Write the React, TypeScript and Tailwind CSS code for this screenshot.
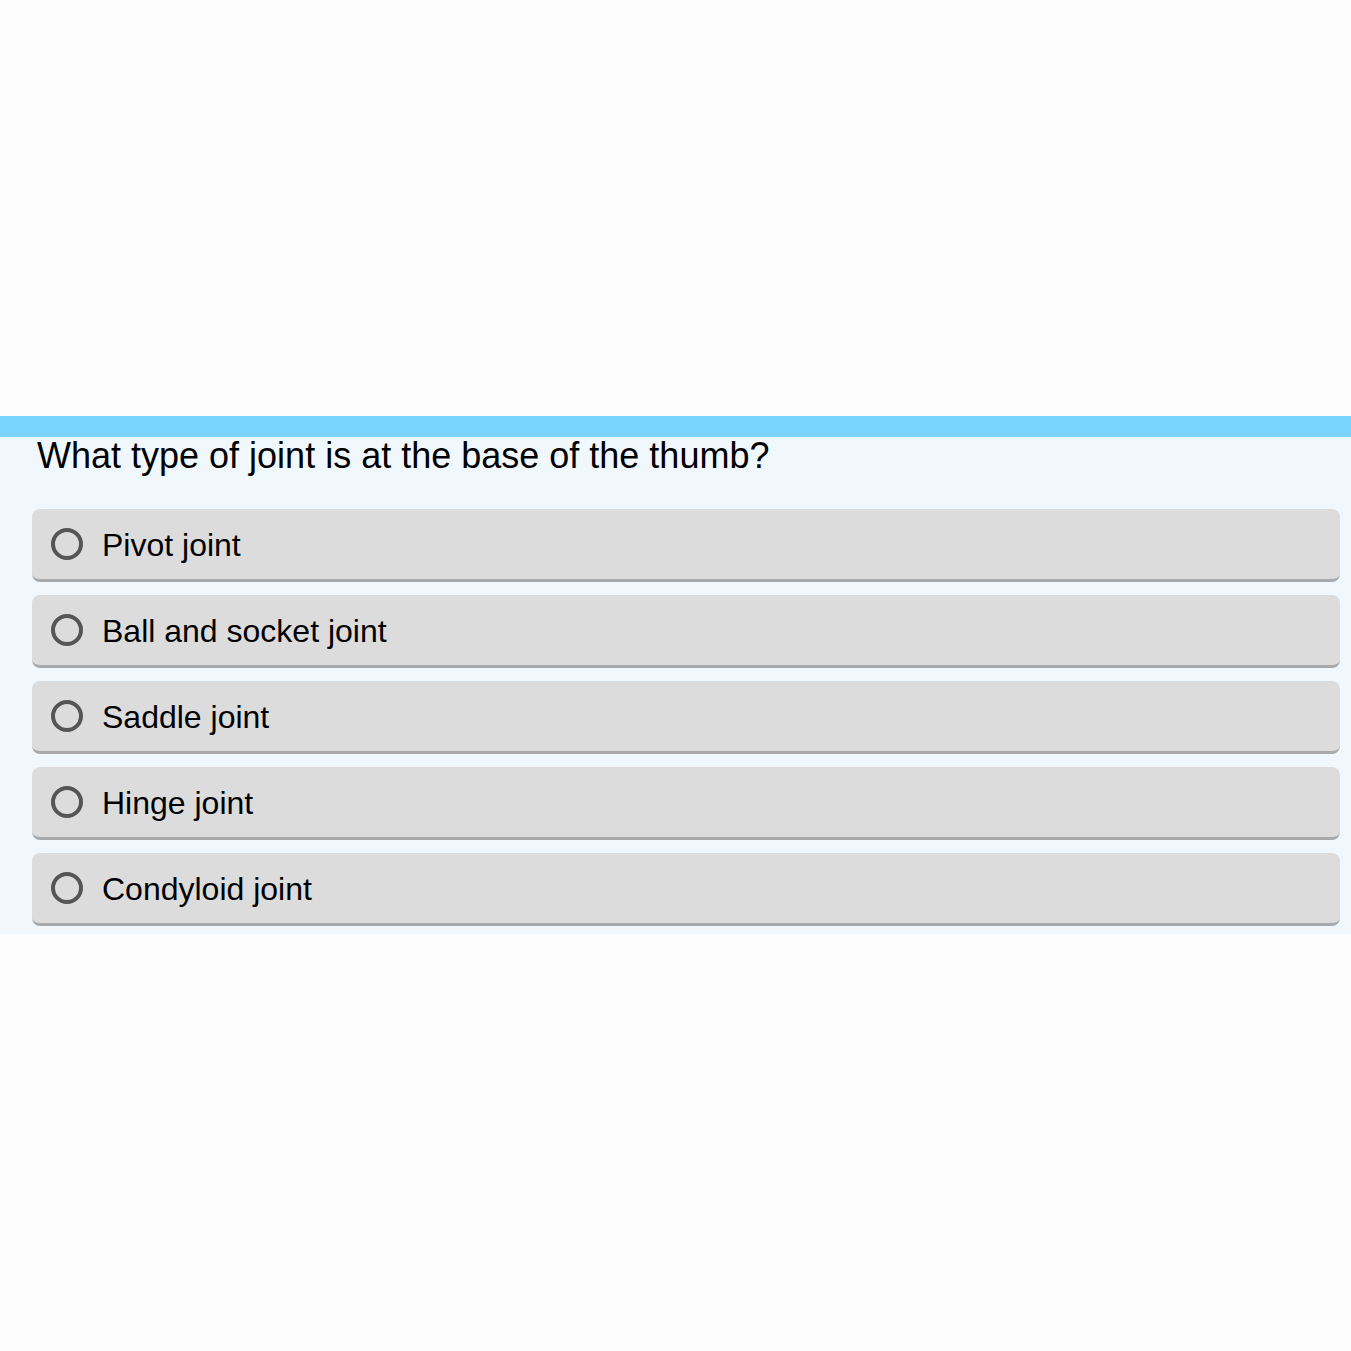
const options = [
  "Pivot joint",
  "Ball and socket joint",
  "Saddle joint",
  "Hinge joint",
  "Condyloid joint",
];

export default function App() {
  return (
    <div
      className="min-h-[1351px] w-full bg-[#fdfdfd] pt-[416px]"
      style={{ fontFamily: '"Liberation Sans", Arial, sans-serif' }}
    >
      <div className="h-[21px] w-full bg-[#79d3fb]" />
      <div className="bg-[#f0f8fd] pb-2 pl-8 pr-[11px]">
        <h1 className="pl-[5px] text-[36px] font-normal leading-[38px] text-black">
          What type of joint is at the base of the thumb?
        </h1>
        <div className="mt-[34px] flex flex-col gap-[13px]">
          {options.map((opt) => (
            <label
              key={opt}
              className="flex h-[73px] cursor-pointer items-center gap-[19px] rounded-lg border-b-[3px] border-[#a8a9ab] bg-[#dcdcdc] pl-[19px]"
            >
              <span className="h-8 w-8 shrink-0 rounded-full border-4 border-[#555555]" />
              <span className="pt-0.5 text-[32px] leading-none text-black">{opt}</span>
            </label>
          ))}
        </div>
      </div>
    </div>
  );
}
